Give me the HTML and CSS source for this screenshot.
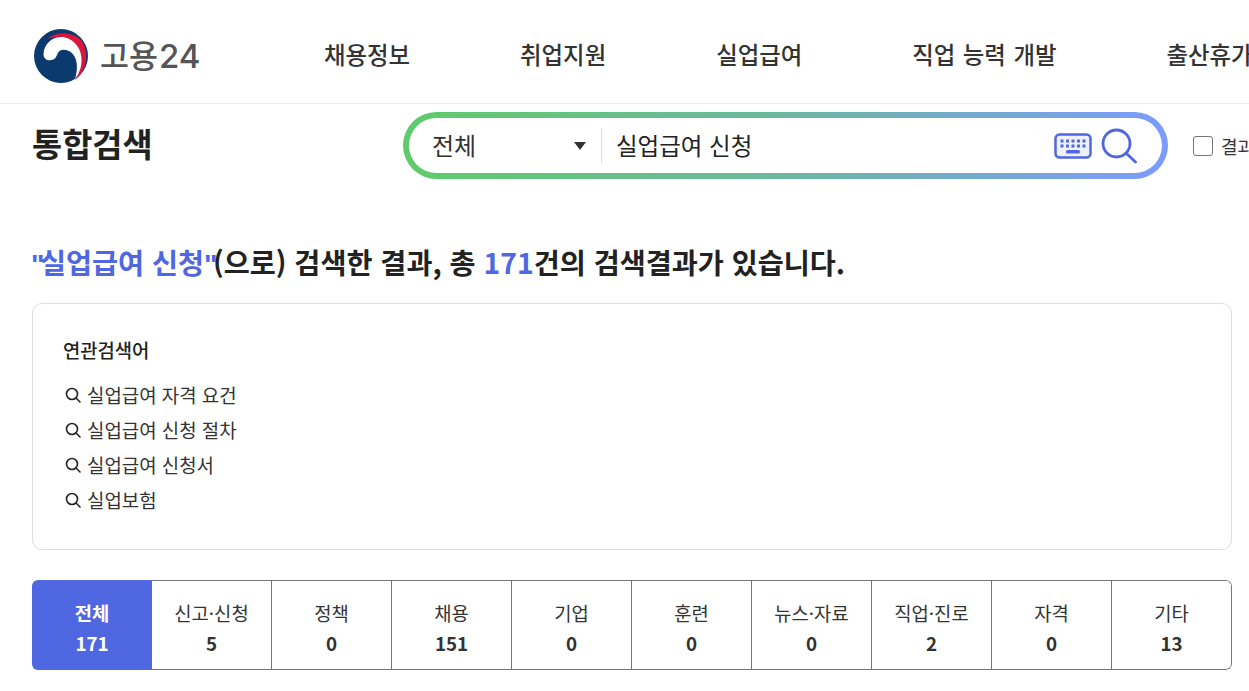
FILE: index.html
```html
<!DOCTYPE html>
<html lang="ko">
<head>
<meta charset="utf-8">
<title>통합검색 | 고용24</title>
<link rel="stylesheet" href="styles.css">
</head>
<body>
<header class="site-header">
  <a class="logo" href="#">
    <svg class="logo-mark" viewBox="0 0 54 54" width="54" height="54" aria-hidden="true">
      <circle cx="27" cy="27" r="27" fill="#0b3a6e"/>
      <path d="M13 10C20 3 38 2 47 11C56 22 53 42 41 51C48 40 49 24 40 15C32 7 20 7 13 10Z" fill="#d8173c"/>
      <path d="M9.500 26C9.500 15 18 8 27 8C38 8 47 18 47.500 29C48 38 45 45 41 50C43 44 43.500 36 42 31C40 24 34 20 28 21C24 21.500 24 25 22 28C19.500 32.500 10.500 33 9.500 26Z" fill="#fff"/>
    </svg>
    <span class="logo-text">고용<span class="logo-num">24</span></span>
  </a>
  <nav class="main-nav">
    <a href="#">채용정보</a>
    <a href="#">취업지원</a>
    <a href="#">실업급여</a>
    <a href="#">직업 능력 개발</a>
    <a href="#">출산휴가</a>
  </nav>
</header>

<section class="search-row">
  <h1 class="page-title">통합검색</h1>
  <div class="search-box">
    <div class="search-inner">
      <div class="scope"><span>전체</span><i class="caret"></i></div>
      <div class="query">실업급여 신청</div>
      <svg class="kbd-icon" viewBox="0 0 38 26" width="38" height="26" aria-hidden="true">
        <rect x="1.500" y="1.500" width="35" height="23" rx="4" fill="#eef1fd" stroke="#4f67e0" stroke-width="2.500"/>
        <g fill="#4f67e0">
          <rect x="6.500" y="6.500" width="3" height="3"/><rect x="12" y="6.500" width="3" height="3"/><rect x="17.500" y="6.500" width="3" height="3"/><rect x="23" y="6.500" width="3" height="3"/><rect x="28.500" y="6.500" width="3" height="3"/>
          <rect x="6.500" y="11.500" width="3" height="3"/><rect x="12" y="11.500" width="3" height="3"/><rect x="17.500" y="11.500" width="3" height="3"/><rect x="23" y="11.500" width="3" height="3"/><rect x="28.500" y="11.500" width="3" height="3"/>
          <rect x="12" y="17" width="14" height="3.500" rx="1.500"/>
        </g>
      </svg>
      <svg class="search-icon" viewBox="0 0 36 36" width="36" height="36" aria-hidden="true">
        <circle cx="15.500" cy="15.500" r="13.500" fill="none" stroke="#4f67e0" stroke-width="2.800"/>
        <path d="M25.500 25.500 34.500 34" fill="none" stroke="#4f67e0" stroke-width="2.800" stroke-linecap="round"/>
      </svg>
    </div>
  </div>
  <label class="within"><span class="check"></span><span>결과 내 재검색</span></label>
</section>

<main class="content">
  <h2 class="result-title"><em><span class="quote">"</span>실업급여 신청<span class="quote">"</span></em>(으로) 검색한 결과, 총 <em>171</em>건의 검색결과가 있습니다.</h2>

  <section class="related">
    <h3>연관검색어</h3>
    <ul>
      <li><svg viewBox="0 0 16 16" width="16" height="16" aria-hidden="true"><circle cx="7" cy="7" r="5.500" fill="none" stroke="#222" stroke-width="1.600"/><path d="M11 11l4 4" stroke="#222" stroke-width="1.600" stroke-linecap="round"/></svg>실업급여 자격 요건</li>
      <li><svg viewBox="0 0 16 16" width="16" height="16" aria-hidden="true"><circle cx="7" cy="7" r="5.500" fill="none" stroke="#222" stroke-width="1.600"/><path d="M11 11l4 4" stroke="#222" stroke-width="1.600" stroke-linecap="round"/></svg>실업급여 신청 절차</li>
      <li><svg viewBox="0 0 16 16" width="16" height="16" aria-hidden="true"><circle cx="7" cy="7" r="5.500" fill="none" stroke="#222" stroke-width="1.600"/><path d="M11 11l4 4" stroke="#222" stroke-width="1.600" stroke-linecap="round"/></svg>실업급여 신청서</li>
      <li><svg viewBox="0 0 16 16" width="16" height="16" aria-hidden="true"><circle cx="7" cy="7" r="5.500" fill="none" stroke="#222" stroke-width="1.600"/><path d="M11 11l4 4" stroke="#222" stroke-width="1.600" stroke-linecap="round"/></svg>실업보험</li>
    </ul>
  </section>

  <div class="tabs">
    <a class="tab active" href="#"><span>전체</span><b>171</b></a>
    <a class="tab" href="#"><span>신고·신청</span><b>5</b></a>
    <a class="tab" href="#"><span>정책</span><b>0</b></a>
    <a class="tab" href="#"><span>채용</span><b>151</b></a>
    <a class="tab" href="#"><span>기업</span><b>0</b></a>
    <a class="tab" href="#"><span>훈련</span><b>0</b></a>
    <a class="tab" href="#"><span>뉴스·자료</span><b>0</b></a>
    <a class="tab" href="#"><span>직업·진로</span><b>2</b></a>
    <a class="tab" href="#"><span>자격</span><b>0</b></a>
    <a class="tab" href="#"><span>기타</span><b>13</b></a>
  </div>
</main>
</body>
</html>
```

FILE: styles.css
```css
* { box-sizing: border-box; }
html, body { margin: 0; padding: 0; height: 100%; overflow: hidden; background: #fff; }
body { width: 1249px; font-family: "Noto Sans CJK KR", "Noto Sans", sans-serif; color: #222; }
a { color: inherit; text-decoration: none; }

.site-header { height: 104px; padding-left: 34px; display: flex; align-items: center; border-bottom: 1px solid #eee; white-space: nowrap; overflow: hidden; }
.logo { display: flex; align-items: center; gap: 12px; width: 290px; flex: none; padding-top: 8px; }
.logo-mark { flex: none; }
.logo-text { font-size: 31.500px; font-weight: 500; color: #555; line-height: 1; }
.logo-num { font-family: "Inter", sans-serif; font-size: 33px; font-weight: 500; margin-left: 1px; }
.main-nav { display: flex; gap: 110px; padding-top: 4px; font-size: 23.400px; font-weight: 500; color: #333; flex: none; word-spacing: 1px; }

.search-row { height: 83px; padding-left: 32px; display: flex; align-items: center; white-space: nowrap; overflow: hidden; }
.page-title { margin: 0; padding-bottom: 5px; width: 371px; flex: none; font-size: 32.800px; font-weight: 700; color: #222; line-height: 1.2; }
.search-box { width: 765px; height: 67px; flex: none; padding: 6px; border-radius: 34px; background: linear-gradient(90deg, #5ecb6b 0%, #6db8a0 50%, #7c9bff 100%); }
.search-inner { height: 55px; background: #fff; border-radius: 28px; display: flex; align-items: center; padding: 0 25px 0 23px; }
.scope { width: 170px; flex: none; height: 35px; display: flex; align-items: center; justify-content: space-between; padding-right: 15px; border-right: 1px solid #ddd; font-size: 24px; color: #333; }
.scope span { padding-bottom: 3px; }
.caret { width: 0; height: 0; border-left: 6px solid transparent; border-right: 6px solid transparent; border-top: 8px solid #333; margin-top: 1px; }
.query { flex: 1; padding: 0 0 2px 14px; font-size: 23.500px; color: #222; }
.kbd-icon { flex: none; margin-right: 9px; }
.search-icon { flex: none; margin-top: 1px; }
.within { margin-left: 25px; display: flex; align-items: center; gap: 8px; font-size: 18px; color: #333; flex: none; }
.check { width: 20px; height: 20px; border: 1px solid #767676; border-radius: 3px; background: #fff; }

.content { padding: 0 17px 0 32px; }
.result-title { margin: 51px 0 0 -1px; height: 48px; font-size: 28.300px; font-weight: 700; line-height: 48px; color: #222; white-space: nowrap; }
.result-title em { font-style: normal; color: #4f67e0; }
.result-title .quote { font-family: "Liberation Sans", sans-serif; letter-spacing: -4.500px; }

.related { margin-top: 17px; height: 247px; width: 1200px; border: 1px solid #ddd; border-radius: 10px; padding: 29px 30px 0; }
.related h3 { margin: 0 0 10px; font-size: 18.800px; font-weight: 500; line-height: 34px; color: #222; }
.related ul { margin: 0; padding: 0; list-style: none; }
.related li { height: 35px; display: flex; align-items: center; gap: 6px; font-size: 18.900px; color: #333; }
.related li svg { flex: none; margin-left: 2px; }

.tabs { margin-top: 30px; width: 1200px; height: 90px; display: flex; border-radius: 6px; overflow: hidden; }
.tab { flex: none; width: 120px; display: flex; flex-direction: column; align-items: center; justify-content: center; gap: 2px; padding-top: 6px; border: 1px solid #767676; border-left: 0; font-size: 18.800px; color: #333; line-height: 28px; }
.tab:last-child { border-radius: 0 6px 6px 0; }
.tab b { font-weight: 700; }
.tab.active { background: #4f67e0; color: #fff; font-weight: 700; border: 0; }
```
